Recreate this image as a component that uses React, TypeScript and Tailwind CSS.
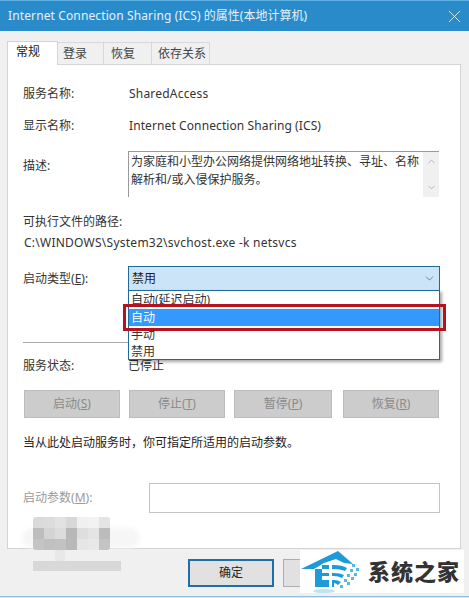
import React from "react";
import { X, ChevronUp, ChevronDown } from "lucide-react";

const FONT = "font-['Noto_Sans','Noto_Sans_CJK_SC',sans-serif]";

const Mnemonic: React.FC<{ text: string; k: string; tail?: string }> = ({ text, k, tail }) => (
  <span>
    {text}(<span className="underline">{k}</span>){tail}
  </span>
);

const DisabledButton: React.FC<{ text: string; k: string; className: string }> = ({ text, k, className }) => (
  <div className={`h-[28px] flex items-center justify-center bg-[#cccccc] border border-[#bcbcbc] text-[#8a8a8a] ${className}`}>
    <Mnemonic text={text} k={k} />
  </div>
);

const mosaic = [
  "#dadada", "#dcdcdc", "#e2e2e2", "#d8d8d8", "#f0f0f0", "#f2f2f2", "#e4e4e4",
  "#bdbdbd", "#d4d4d4", "#dcdcdc", "#b8b8b8", "#dedede", "#e4e4e4", "#bcbcbc",
  "#c4c4c4", "#c0c0c0", "#c2c2c2", "#b8b8b8", "#e6e6e6", "#e8e8e8", "#c4c4c4",
];

export default function App() {
  return (
    <div className={`${FONT} relative w-[469px] h-[598px] overflow-hidden bg-[#f0f0f0] text-[12px] text-[#222222] flex flex-col`}>
      {/* title bar */}
      <div className="h-[31px] shrink-0 bg-[#2a8bca] border-t border-[#5fb0e4] flex items-center justify-between pl-[8px] pr-[4px] text-[12px] text-[#e4f1fa]">
        <span>
          <span className="tracking-[0.12px]">Internet Connection Sharing (ICS)</span> 的属性(本地计算机)
        </span>
        <X className="w-[21px] h-[21px]" strokeWidth={1} />
      </div>

      {/* tabs */}
      <div className="flex items-end h-[33px] shrink-0 pl-[7px]">
        <div className="w-[51px] h-[24px] -mb-px z-10 bg-white border border-b-0 border-[#d4d4d4] pl-[8px] pt-[1px]">常规</div>
        <div className="w-[46px] h-[22px] border border-l-0 border-b-0 border-[#d8d8d8] pl-[5px] pt-[2px] text-[#444444]">登录</div>
        <div className="w-[48px] h-[22px] border border-l-0 border-b-0 border-[#d8d8d8] pl-[7px] pt-[2px] text-[#444444]">恢复</div>
        <div className="w-[58px] h-[22px] border border-l-0 border-b-0 border-[#d8d8d8] pl-[6px] pt-[2px] text-[#444444]">依存关系</div>
      </div>

      {/* panel */}
      <div className="mx-[7px] w-[454px] h-[485px] shrink-0 bg-white border border-[#d4d4d4] pl-[15px] pr-[20px] flex flex-col">
        <div className="flex h-[20px] mt-[19px] items-center text-[#333333]">
          <span className="w-[106px] shrink-0">服务名称:</span>
          <span className="tracking-[0.2px]">SharedAccess</span>
        </div>
        <div className="flex h-[20px] mt-[12px] items-center text-[#333333]">
          <span className="w-[106px] shrink-0">显示名称:</span>
          <span className="tracking-[0.1px]">Internet Connection Sharing (ICS)</span>
        </div>
        <div className="flex mt-[15px] text-[#333333]">
          <span className="w-[105px] shrink-0 mt-[6px]">描述:</span>
          <div className="w-[311px] h-[46px] border-l border-t border-[#9a9a9a] flex">
            <div className="flex-1 pl-[2px] pt-[1px] leading-[18px]">
              为家庭和小型办公网络提供网络地址转换、寻址、名称解析和/或入侵保护服务。
            </div>
            <div className="w-[16px] bg-[#f0f0f0] flex flex-col items-center justify-between py-[4px] text-[#b0b0b0]">
              <ChevronUp className="w-[11px] h-[11px]" />
              <ChevronDown className="w-[11px] h-[11px]" />
            </div>
          </div>
        </div>
        <div className="h-[20px] mt-[15px] flex items-center text-[#333333]">可执行文件的路径:</div>
        <div className="h-[20px] mt-[1px] pl-[1px] flex items-center text-[#333333] tracking-[0.25px]">C:\WINDOWS\System32\svchost.exe -k netsvcs</div>

        <div className="flex mt-[13px] items-center">
          <span className="w-[105px] shrink-0 text-[#333333]">
            <Mnemonic text="启动类型" k="E" tail=":" />
          </span>
          <div className="relative w-[312px] h-[25px] bg-[#cce4f7] border border-[#1f6a9c] flex items-center justify-between px-[3px]">
            <span>禁用</span>
            <ChevronDown className="w-[13px] h-[13px] text-[#4a4a4a]" strokeWidth={1.2} />
            {/* open list */}
            <div className="absolute z-20 left-[-1px] top-[23px] w-[312px] h-[70px] bg-white border border-[#1f6a9c] shadow-[2px_2px_3px_rgba(0,0,0,0.35)] leading-[17px] text-[#333333]">
              <div className="h-[17px] pl-[2px]">自动(延迟启动)</div>
              <div className="h-[17px] mt-px pl-[2px] bg-[#3399ff] text-white">自动</div>
              <div className="h-[17px] pl-[2px]">手动</div>
              <div className="h-[16px] pl-[2px]">禁用</div>
            </div>
            {/* red marker */}
            <div className="absolute z-30 left-[-6px] top-[37px] w-[323px] h-[27px] border-[3px] border-[#b5121f]" />
          </div>
        </div>

        <div className="h-px w-[417px] bg-[#a8a8a8] mt-[51px]" />
        <div className="flex h-[20px] mt-[13px] items-center text-[#333333]">
          <span className="w-[105px] shrink-0">服务状态:</span>
          <span>已停止</span>
        </div>

        <div className="flex mt-[14px] w-[416px] pl-px">
          <DisabledButton text="启动" k="S" className="w-[96px]" />
          <DisabledButton text="停止" k="T" className="w-[96px] ml-[9px]" />
          <DisabledButton text="暂停" k="P" className="w-[98px] ml-[9px]" />
          <DisabledButton text="恢复" k="R" className="w-[96px] ml-[11px]" />
        </div>

        <div className="h-[20px] mt-[15px] flex items-center">当从此处启动服务时，你可指定所适用的启动参数。</div>

        <div className="flex mt-[30px] items-center">
          <span className="w-[126px] shrink-0 text-[#9a9a9a]">
            <Mnemonic text="启动参数" k="M" tail=":" />
          </span>
          <div className="w-[291px] h-[30px] bg-white border border-[#c4c4c4]" />
        </div>
      </div>

      {/* footer */}
      <div className="flex pl-[188px] pt-[10px]">
        <div className="w-[86px] h-[28px] bg-[#e1e1e1] border-2 border-[#1f6ea8] flex items-center justify-center">确定</div>
        <div className="w-[86px] h-[28px] ml-[9px] bg-[#e1e1e1] border border-[#adadad]" />
      </div>
      <div className="absolute left-0 right-0 bottom-0 h-[2px] bg-[#d8eaf5] border-t border-[#8cc0e0]" />

      {/* mosaic over the left corner */}
      <div className="absolute z-10 left-[22px] top-[528px] w-[118px] h-[20px] rounded-[10px] bg-[#f6f6f6] blur-[2px]" />
      <div className="absolute z-10 left-[33px] top-[517px] w-[77px] h-[33px] grid grid-cols-7 grid-rows-3 rounded-[3px] overflow-hidden">
        {mosaic.map((c, i) => (
          <div key={i} style={{ backgroundColor: c }} />
        ))}
      </div>
      <div className="absolute z-10 left-[55px] top-[550px] w-[10px] h-[11px] bg-[#e8e8e8]" />
      <div className="absolute z-10 left-[33px] top-[561px] w-[88px] h-[10px] bg-[#d8d8d8]" />

      {/* watermark */}
      <div className="absolute z-20 left-[300px] top-[550px] w-[164px] h-[43px] bg-white flex items-start overflow-hidden">
        <svg width="62" height="43" viewBox="0 0 62 43" className="shrink-0">
          <path d="M1 19 L38 1 L53 14 L44 13 L36 9 L24 13 L14 19 Z" fill="#1c9bd8" />
          <path d="M15 19 H22 V37 H15 Z" fill="#1c9bd8" />
          <path d="M22 15 H34 Q42 15 47 18 L45 21 Q40 19 34 19 H22 Z" fill="#1c9bd8" />
          <path d="M22 23 H34 Q40 23 44 25 L42 28 Q38 26 34 26 H22 Z" fill="#1c9bd8" />
          <path d="M22 30 H34 Q38 30 41 32 L38 35 Q36 33 33 33 H22 Z" fill="#1c9bd8" />
          <rect x="22" y="33" width="12" height="4" fill="#1c9bd8" />
          <rect x="29" y="15" width="3" height="22" fill="#ffffff" />
          <g fill="#57b8e6">
            <rect x="52" y="14" width="3" height="3" />
            <rect x="56" y="18" width="3" height="3" />
            <rect x="50" y="19" width="3" height="3" />
            <rect x="54" y="23" width="3" height="3" />
            <rect x="47" y="24" width="3" height="3" />
            <rect x="51" y="27" width="3" height="3" />
            <rect x="44" y="29" width="3" height="3" />
            <rect x="47" y="32" width="3" height="3" />
            <rect x="40" y="35" width="3" height="3" />
          </g>
          <ellipse cx="24" cy="41" rx="11" ry="2" fill="#bfe3f5" />
        </svg>
        <span className="ml-[6px] mt-[9px] text-[22px] leading-none font-black tracking-[1px] text-[#333333] font-['Noto_Sans_CJK_SC',sans-serif]">系统之家</span>
      </div>
    </div>
  );
}
